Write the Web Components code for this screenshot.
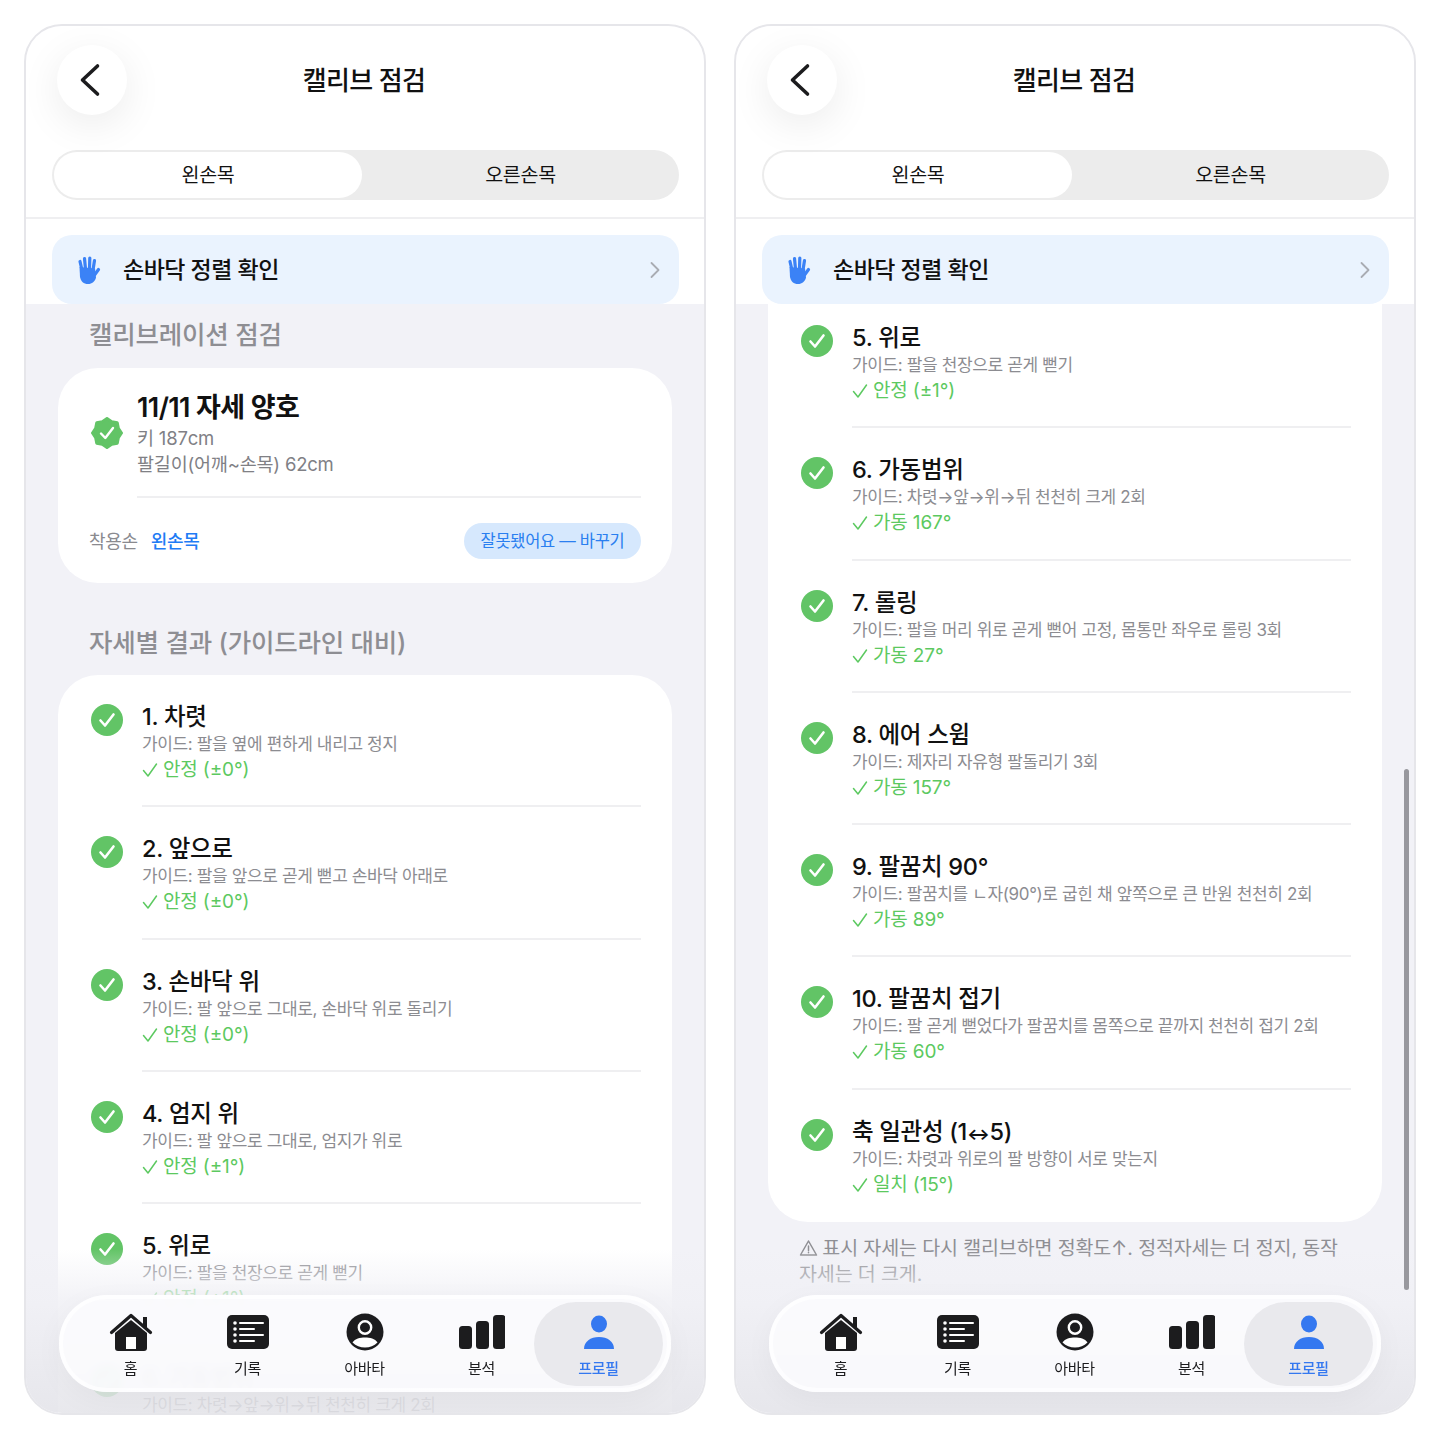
<!DOCTYPE html>
<html lang="ko">
<head>
<meta charset="utf-8">
<title>캘리브 점검</title>
<style>
  html, body { margin: 0; background: #fff; }
  body {
    height: 1439px;
    box-sizing: border-box;
    padding: 24px;
    display: flex;
    gap: 28px;
    overflow: hidden;
    font-family: Inter, "Noto Sans CJK KR", sans-serif;
    color: #111;
  }
</style>
</head>
<body>
<calib-screen></calib-screen>
<calib-screen scrolled></calib-screen>

<script>
// Data untuk daftar pose
const poses = [
  { title: '1. 차렷', guide: '가이드: 팔을 옆에 편하게 내리고 정지', status: '안정 (±0°)' },
  { title: '2. 앞으로', guide: '가이드: 팔을 앞으로 곧게 뻗고 손바닥 아래로', status: '안정 (±0°)' },
  { title: '3. 손바닥 위', guide: '가이드: 팔 앞으로 그대로, 손바닥 위로 돌리기', status: '안정 (±0°)' },
  { title: '4. 엄지 위', guide: '가이드: 팔 앞으로 그대로, 엄지가 위로', status: '안정 (±1°)' },
  { title: '5. 위로', guide: '가이드: 팔을 천장으로 곧게 뻗기', status: '안정 (±1°)' },
  { title: '6. 가동범위', guide: '가이드: 차렷→앞→위→뒤 천천히 크게 2회', status: '가동 167°' },
  { title: '7. 롤링', guide: '가이드: 팔을 머리 위로 곧게 뻗어 고정, 몸통만 좌우로 롤링 3회', status: '가동 27°' },
  { title: '8. 에어 스윔', guide: '가이드: 제자리 자유형 팔돌리기 3회', status: '가동 157°' },
  { title: '9. 팔꿈치 90°', guide: '가이드: 팔꿈치를 ㄴ자(90°)로 굽힌 채 앞쪽으로 큰 반원 천천히 2회', status: '가동 89°' },
  { title: '10. 팔꿈치 접기', guide: '가이드: 팔 곧게 뻗었다가 팔꿈치를 몸쪽으로 끝까지 천천히 접기 2회', status: '가동 60°' },
  { title: '축 일관성 (1<small>↔</small>5)', guide: '가이드: 차렷과 위로의 팔 방향이 서로 맞는지', status: '일치 (15°)' },
];

const navItems = [
  { label: '홈', icon: `<svg width="46" height="40" viewBox="0 0 46 40"><path d="M7 21 23 8l16 13v15a3 3 0 0 1-3 3H10a3 3 0 0 1-3-3z" fill="#1c1c1e"/><rect x="35" y="5" width="4" height="11" fill="#1c1c1e"/><path d="M3.5 20.500 23 3.500l19.500 17" fill="none" stroke="#1c1c1e" stroke-width="3.200" stroke-linecap="round" stroke-linejoin="round"/><rect x="18" y="25" width="10" height="12" fill="#fff"/></svg>` },
  { label: '기록', icon: `<svg width="46" height="40" viewBox="0 0 46 40"><rect x="2" y="3" width="42" height="34" rx="5" fill="#1c1c1e"/><g fill="#fff"><circle cx="10" cy="11" r="1.800"/><circle cx="10" cy="17" r="1.800"/><circle cx="10" cy="23" r="1.800"/><circle cx="10" cy="29" r="1.800"/><rect x="14" y="10" width="25" height="2" rx="1"/><rect x="14" y="16" width="16" height="2" rx="1"/><rect x="14" y="22" width="25" height="2" rx="1"/><rect x="14" y="28" width="16" height="2" rx="1"/></g></svg>` },
  { label: '아바타', icon: `<svg width="46" height="40" viewBox="0 0 46 40"><circle cx="23" cy="20" r="18.500" fill="#1c1c1e"/><circle cx="23" cy="15.500" r="6.200" fill="#1c1c1e" stroke="#fff" stroke-width="2.400"/><path d="M10.500 30.500C13 26.500 18 25.500 23 25.500s10 1 12.500 5C32 34 28 35.600 23 35.600S14 34 10.500 30.500z" fill="#fff"/></svg>` },
  { label: '분석', icon: `<svg width="46" height="40" viewBox="0 0 46 40" fill="#1c1c1e"><rect x="0" y="14" width="13" height="23" rx="3.500"/><rect x="17" y="9" width="13" height="28" rx="3.500"/><rect x="34" y="3" width="12.500" height="34" rx="3.500"/></svg>` },
  { label: '프로필', active: true, icon: `<svg width="46" height="40" viewBox="0 0 46 40" fill="#3478f0"><ellipse cx="23" cy="12" rx="8" ry="8.500"/><path d="M8 37c0-7.500 6.500-12 15-12s15 4.500 15 12z"/></svg>` },
];

// Helper untuk titik-titik seal centang
function sealPoints(cx, cy, outer, inner, bumps) {
  const pts = [];
  for (let i = 0; i < bumps * 2; i++) {
    const r = i % 2 ? inner : outer;
    const a = (Math.PI * i) / bumps - Math.PI / 2;
    pts.push(`${(cx + r * Math.cos(a)).toFixed(2)},${(cy + r * Math.sin(a)).toFixed(2)}`);
  }
  return pts.join(' ');
}

// Custom Element untuk header
class CalibHeader extends HTMLElement {
  constructor() {
    super();
    this.attachShadow({ mode: 'open' });
  }
  connectedCallback() {
    this.shadowRoot.innerHTML = `
      <style>
        :host { display: block; background: #fff; padding: 19px 25px 0 26px; }
        .top { position: relative; height: 70px; display: flex; align-items: center; justify-content: center; padding-right: 3px; }
        .back {
          position: absolute; left: 5px; top: 0;
          width: 70px; height: 70px; border-radius: 50%;
          background: #fff; box-shadow: 0 10px 40px rgba(0, 0, 0, 0.08);
          display: flex; align-items: center; justify-content: center;
        }
        .back svg { margin-left: -4px; }
        h1 { margin: 2px 0 0; font-size: 26px; line-height: 32px; font-weight: 500; color: #111; letter-spacing: -0.7px; }
        .seg {
          margin-top: 35px; height: 50px; box-sizing: border-box; padding: 2px;
          border-radius: 25px; background: #ececec; display: flex;
          font-size: 19.500px; color: #111; letter-spacing: -0.3px;
        }
        .seg div { display: flex; align-items: center; justify-content: center; border-radius: 23px; padding-bottom: 3px; box-sizing: border-box; }
        .seg .on { width: 308px; background: #fff; }
        .seg .off { flex: 1; padding-left: 2px; }
        .line { height: 2px; background: #efeff1; margin: 17px -25px 16px -26px; }
        .palm {
          height: 69px; box-sizing: border-box; padding: 0 18px 0 23px;
          border-radius: 20px; background: #eaf3fe;
          display: flex; align-items: center; gap: 22px;
          font-size: 23px; font-weight: 500; color: #111; letter-spacing: -0.5px;
        }
        .palm span { flex: 1; margin-bottom: 4px; }
      </style>
      <div class="top">
        <div class="back">
          <svg width="24" height="34" viewBox="0 0 24 34"><path d="M19.500 3 4.500 17l15 14" fill="none" stroke="#1c1c1e" stroke-width="3.600" stroke-linecap="round" stroke-linejoin="round"/></svg>
        </div>
        <h1>캘리브 점검</h1>
      </div>
      <div class="seg"><div class="on">왼손목</div><div class="off">오른손목</div></div>
      <div class="line"></div>
      <div class="palm">
        <svg width="26" height="30" viewBox="0 0 26 30">
          <g stroke="#3b82f6" stroke-width="3.200" stroke-linecap="round" fill="none">
            <path d="M7 15 5 6.500"/><path d="M10.500 14 9.500 3.500"/><path d="M14.500 14 14.800 3"/><path d="M18 15 19.500 5.500"/><path d="M19.500 20 23.500 14.500"/>
          </g>
          <path d="M4.500 12 20 13.500l1 9c-1 4-4 6.500-8 6.500-4.500 0-7-2.500-8-7z" fill="#3b82f6"/>
        </svg>
        <span>손바닥 정렬 확인</span>
        <svg width="12" height="18" viewBox="0 0 12 18"><path d="M2.500 2 9.500 9l-7 7" fill="none" stroke="#a9acb3" stroke-width="1.800" stroke-linecap="round" stroke-linejoin="round"/></svg>
      </div>
    `;
  }
}

// Custom Element untuk kartu ringkasan
class SummaryCard extends HTMLElement {
  constructor() {
    super();
    this.attachShadow({ mode: 'open' });
  }
  connectedCallback() {
    this.shadowRoot.innerHTML = `
      <style>
        :host { display: block; background: #fff; border-radius: 40px; margin: 0 32px; padding: 22px 31px 24px 33px; }
        .head { display: flex; align-items: center; gap: 14px; }
        .txt { padding-top: 1px; margin-bottom: -1px; }
        b { display: block; font-size: 27px; line-height: 34px; font-weight: 600; letter-spacing: -0.6px; color: #111; }
        p { margin: 0; font-size: 18.500px; line-height: 26px; color: #808085; letter-spacing: -0.2px; }
        .div { height: 2px; background: #efeff1; margin: 20px 0 25px 46px; }
        .row { display: flex; align-items: center; margin-left: -2px; font-size: 18px; color: #8a8a8f; letter-spacing: -0.3px; }
        .row > span { margin-bottom: 2px; }
        .hand { color: #1f7cf5; margin-left: 13px; flex: 1; font-weight: 500; }
        .row > .pill { margin: 0; height: 36px; width: 177px; box-sizing: border-box; padding-bottom: 2px; border-radius: 18px; background: #d6e8fd; color: #2a7ff0; font-size: 16.500px; display: flex; align-items: center; justify-content: center; }
      </style>
      <div class="head">
        <svg width="32" height="32" viewBox="0 0 32 32">
          <polygon points="${sealPoints(16, 16, 14.500, 12.300, 8)}" fill="#62c466" stroke="#62c466" stroke-width="3" stroke-linejoin="round"/>
          <path d="M10 16.500l4.300 4.500 7.700-10" fill="none" stroke="#fff" stroke-width="2.400" stroke-linecap="round" stroke-linejoin="round"/>
        </svg>
        <div class="txt"><b>11/11 자세 양호</b><p>키 187cm</p><p>팔길이(어깨~손목) 62cm</p></div>
      </div>
      <div class="div"></div>
      <div class="row"><span>착용손</span><span class="hand">왼손목</span><span class="pill">잘못됐어요 — 바꾸기</span></div>
    `;
  }
}

// Custom Element untuk satu baris pose
class PoseRow extends HTMLElement {
  constructor() {
    super();
    this.attachShadow({ mode: 'open' });
  }
  connectedCallback() {
    const last = this.hasAttribute('last');
    this.shadowRoot.innerHTML = `
      <style>
        :host { display: block; padding-top: 26px; }
        .row { display: flex; gap: 19px; padding: 0 31px ${last ? 24 : 22.25}px 33px; }
        svg { flex: none; margin-top: 3px; }
        h3 { margin: 0; font-size: 23.500px; line-height: 31px; font-weight: 500; color: #111; letter-spacing: -0.3px; }
        h3 small { font-size: 17px; line-height: 0; font-weight: 700; }
        p { margin: 0; font-size: 17px; line-height: 25px; color: #8c8c91; letter-spacing: -0.37px; white-space: nowrap; }
        .st { font-size: 19px; line-height: 26px; color: #5cc960; letter-spacing: -0.15px; display: flex; align-items: center; gap: 5px; }
        .st svg { margin: 0; }
        .div { height: 2px; background: #efeff1; margin-left: 84px; margin-right: 31px; }
      </style>
      <div class="row">
        <svg width="32" height="32" viewBox="0 0 32 32">
          <circle cx="16" cy="16" r="16" fill="#62c466"/>
          <path d="M9.500 16.500l4.500 5 8.500-11" fill="none" stroke="#fff" stroke-width="2.600" stroke-linecap="round" stroke-linejoin="round"/>
        </svg>
        <div>
          <h3>${this.getAttribute('title')}</h3>
          <p>${this.getAttribute('guide')}</p>
          <div class="st">
            <svg width="16" height="16" viewBox="0 0 16 16"><path d="M1.500 8.500 6 14 14.500 2" fill="none" stroke="#5cc960" stroke-width="1.500" stroke-linecap="round" stroke-linejoin="round"/></svg>
            <span>${this.getAttribute('status')}</span>
          </div>
        </div>
      </div>
      ${last ? '' : '<div class="div"></div>'}
    `;
  }
}

// Custom Element untuk kartu dengan slot
class PoseCard extends HTMLElement {
  constructor() {
    super();
    this.attachShadow({ mode: 'open' });
    this.shadowRoot.innerHTML = `
      <style>
        :host { display: block; background: #fff; border-radius: 40px; margin: 0 32px; }
        :host([scrolled]) { border-radius: 0 0 40px 40px; margin-top: -8px; }
      </style>
      <slot></slot>
    `;
  }
}

// Custom Element untuk navigasi bawah
class BottomNav extends HTMLElement {
  constructor() {
    super();
    this.attachShadow({ mode: 'open' });
  }
  connectedCallback() {
    const items = navItems.map(item => `
      <div class="item${item.active ? ' active' : ''}">${item.icon}<span>${item.label}</span></div>
    `).join('');
    this.shadowRoot.innerHTML = `
      <style>
        :host {
          position: absolute; left: 33px; bottom: 21px; width: 612px; height: 97px;
          box-sizing: border-box; padding: 7px 14px 6px 13px;
          display: flex; border-radius: 48px;
          background: rgba(252, 252, 254, 0.86);
          -webkit-backdrop-filter: blur(3px);
          backdrop-filter: blur(3px);
          box-shadow: inset 0 0 0 4px rgba(255, 255, 255, 0.7), 0 8px 30px rgba(0, 0, 0, 0.04);
        }
        .item {
          flex: 0 0 117px; box-sizing: border-box; padding-top: 10px;
          display: flex; flex-direction: column; align-items: center;
          font-size: 15px; line-height: 20px; color: #1c1c1e; letter-spacing: -0.3px;
        }
        .item svg { margin-bottom: 7px; }
        .active {
          flex: 0 0 129px; margin: 0 -6px; border-radius: 42px;
          background: #e9e9ed; color: #3478f0; font-weight: 500;
        }
      </style>
      ${items}
    `;
  }
}

// Custom Element untuk satu layar telepon
class CalibScreen extends HTMLElement {
  constructor() {
    super();
    this.attachShadow({ mode: 'open' });
  }
  connectedCallback() {
    const scrolled = this.hasAttribute('scrolled');
    // Layar kiri: pose 1-6, layar kanan: pose 5 sampai akhir
    const shown = scrolled ? poses.slice(4) : poses.slice(0, 6);
    const rows = shown.map(p => `
      <pose-row title="${p.title}" guide="${p.guide}" status="${p.status}"${p === poses[poses.length - 1] ? ' last' : ''}></pose-row>
    `).join('');
    const top = `
      <h2 class="h-first">캘리브레이션 점검</h2>
      <summary-card></summary-card>
      <h2 class="h-second">자세별 결과 (가이드라인 대비)</h2>
    `;
    const note = `
      <p class="note"><svg width="19" height="18" viewBox="0 0 19 18"><path d="M9.500 2 17.500 16h-16z" fill="none" stroke="#8e8e93" stroke-width="1.500" stroke-linejoin="round"/><path d="M9.500 7v4.500M9.500 13.200v.6" stroke="#8e8e93" stroke-width="1.500" stroke-linecap="round"/></svg> 표시 자세는 다시 캘리브하면 정확도↑. 정적자세는 더 정지, 동작 자세는 더 크게.</p>
    `;
    this.shadowRoot.innerHTML = `
      <style>
        :host {
          display: flex; flex-direction: column; position: relative;
          width: 682px; height: 1391px; box-sizing: border-box;
          border: 2px solid #e6e6ea; border-radius: 38px; overflow: hidden; background: #f2f2f7;
        }
        .content { flex: 1; min-height: 0; position: relative; overflow: hidden; background: #f2f2f7; }
        .scroll { padding-top: ${scrolled ? 0 : 16}px; }
        h2 { margin: 0; padding-left: 63px; font-size: 25.500px; line-height: 30px; font-weight: 500; color: #8e8e93; letter-spacing: -0.2px; }
        .h-first { margin-bottom: 18px; }
        .h-second { margin: 45px 0 17px; }
        .note {
          margin: 13px 0 0; padding: 0 60px 0 63px;
          font-size: 19.500px; line-height: 26px; color: #8e8e93; letter-spacing: -0.12px;
        }
        .note svg { vertical-align: -2px; margin-right: -1px; }
        .fade {
          position: absolute; left: 0; right: 0; bottom: 0; height: 164px;
          background: linear-gradient(rgba(240, 240, 245, 0), rgba(240, 240, 245, 0.85) 32%, rgba(229, 229, 234, 0.88));
        }
        .bar {
          position: absolute; right: 5px; top: 465px; width: 5px; height: 521px;
          border-radius: 3px; background: #98989e;
        }
      </style>
      <calib-header></calib-header>
      <div class="content">
        <div class="scroll">
          ${scrolled ? '' : top}
          <pose-card${scrolled ? ' scrolled' : ''}>${rows}</pose-card>
          ${scrolled ? note : ''}
        </div>
        <div class="fade"></div>
        ${scrolled ? '<div class="bar"></div>' : ''}
        <bottom-nav></bottom-nav>
      </div>
    `;
  }
}

// Mendefinisikan custom element
customElements.define('calib-header', CalibHeader);
customElements.define('summary-card', SummaryCard);
customElements.define('pose-row', PoseRow);
customElements.define('pose-card', PoseCard);
customElements.define('bottom-nav', BottomNav);
customElements.define('calib-screen', CalibScreen);
</script>
</body>
</html>
